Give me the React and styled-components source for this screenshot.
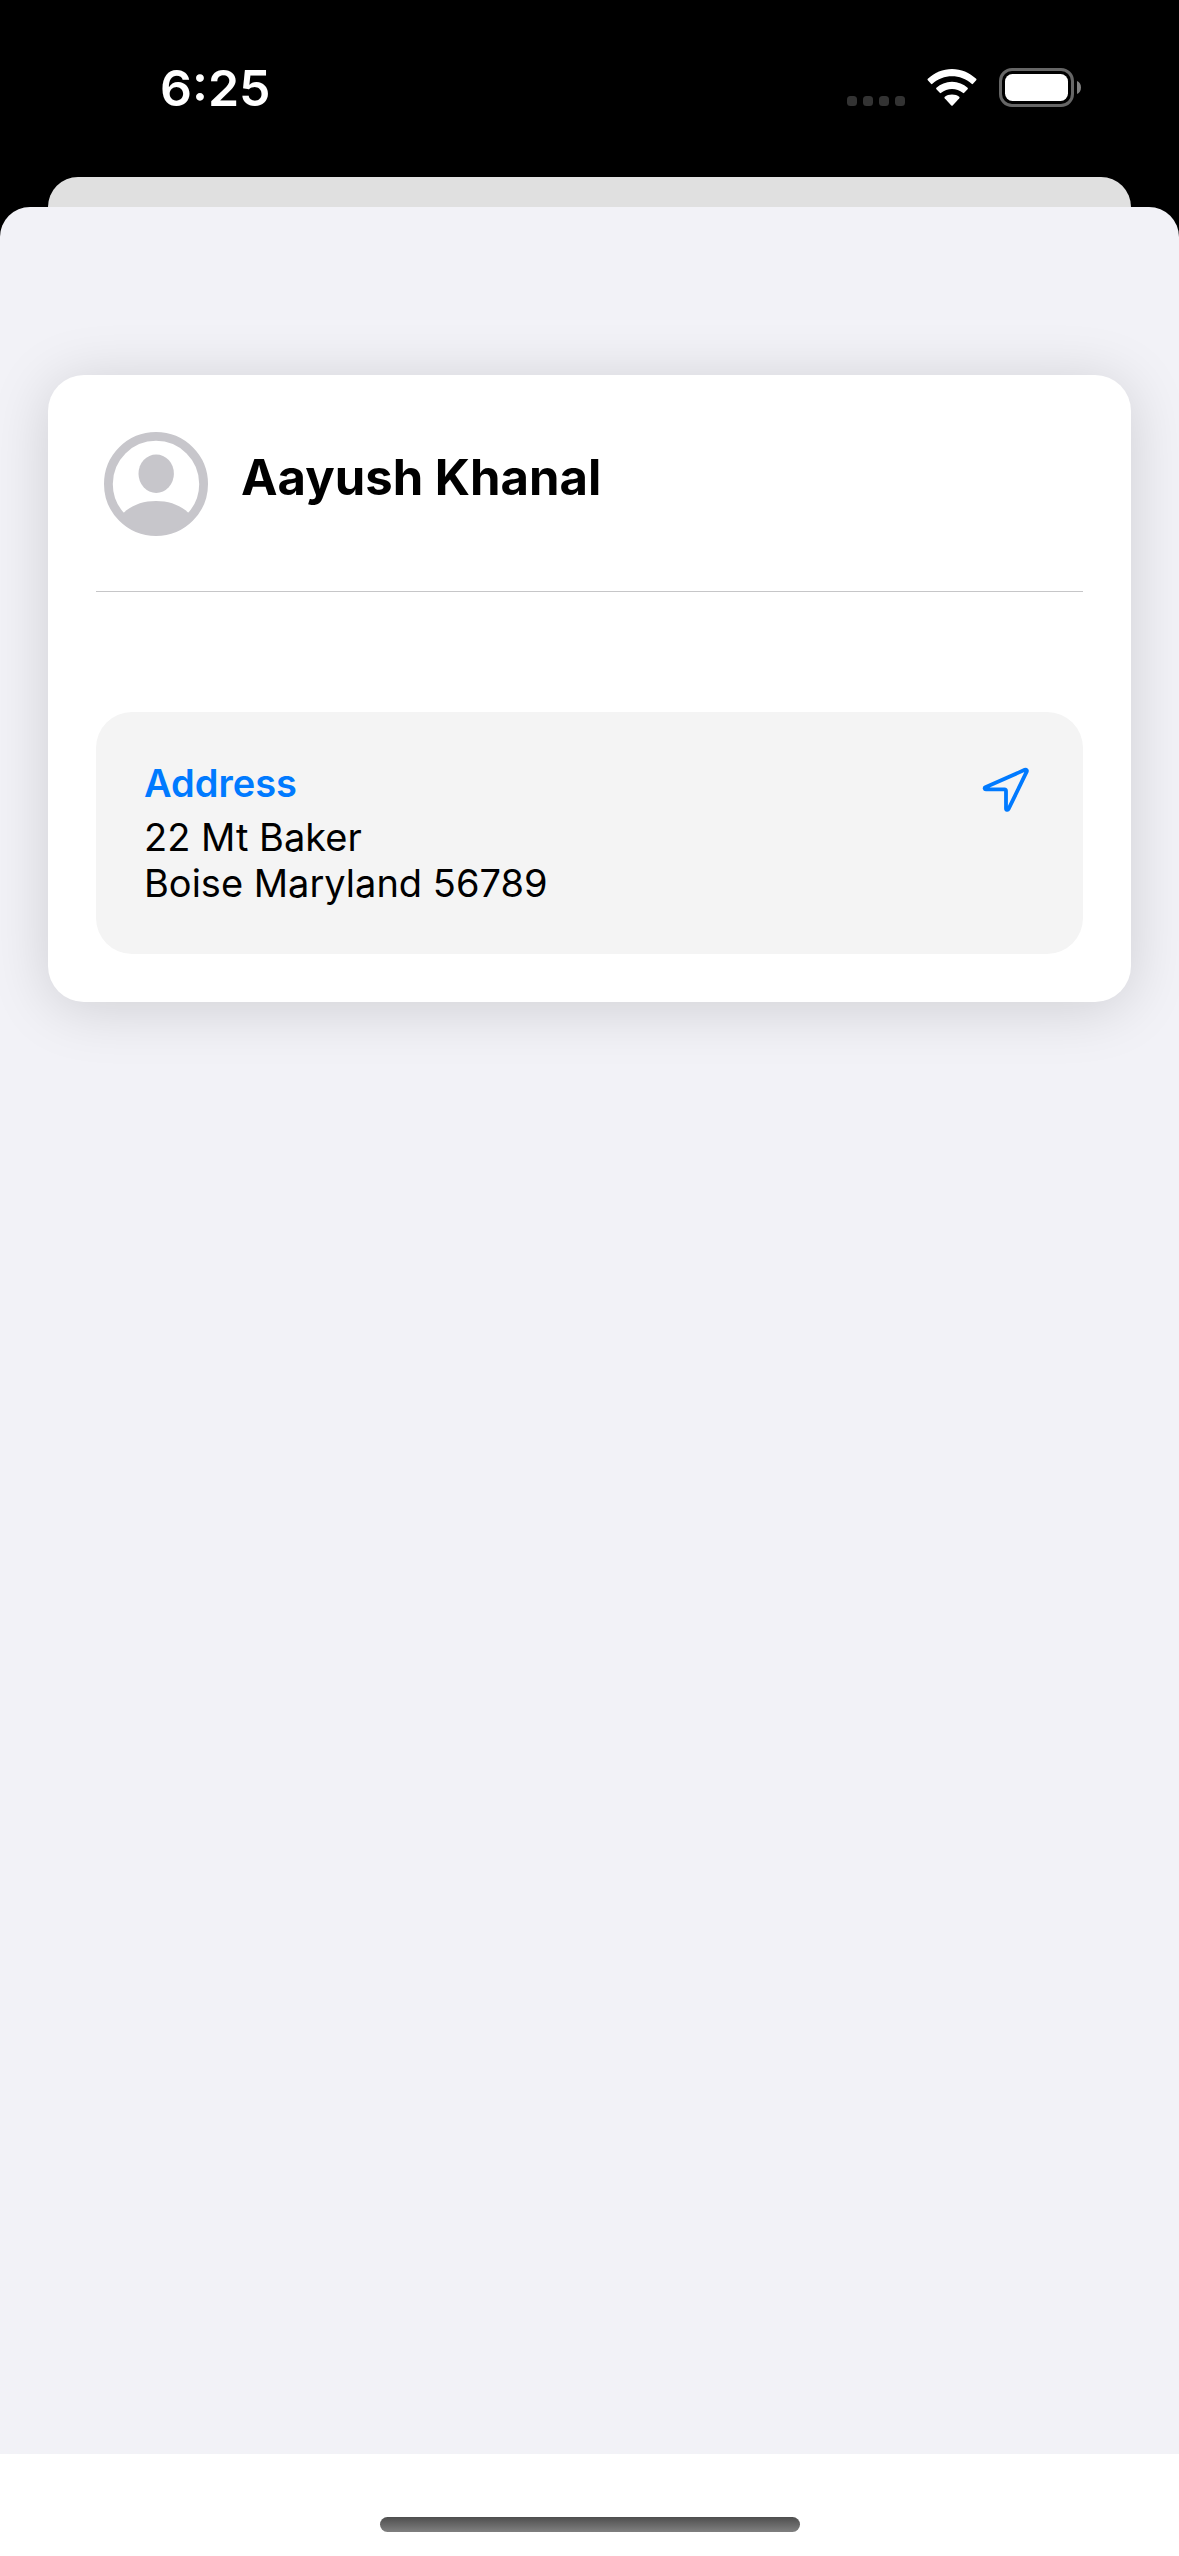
import React from "react";
import styled, { createGlobalStyle } from "styled-components";

const GlobalStyle = createGlobalStyle`
  *, *::before, *::after { box-sizing: border-box; }
  html, body { margin: 0; background: #000; }
  body, button { font-family: Inter, "Liberation Sans", sans-serif; }
`;

const Screen = styled.div`
  display: flex;
  flex-direction: column;
  min-height: 100vh;
  background: #000;
`;

const StatusBar = styled.header`
  display: flex;
  align-items: center;
  justify-content: space-between;
  height: 177px;
  padding: 0 98px 2px 160px;
  color: #fff;
`;

const Time = styled.time`
  font-size: 50px;
  line-height: 60px;
  font-weight: 600;
`;

const Indicators = styled.div`
  display: flex;
  align-items: center;
  gap: 22px;
`;

const BackSheet = styled.div`
  height: 30px;
  margin: 0 48px;
  border-radius: 30px 30px 0 0;
  background: #e0e0e0;
`;

const Sheet = styled.main`
  flex: 1;
  padding: 168px 48px;
  border-radius: 30px 30px 0 0;
  background: #f2f2f7;
`;

const Card = styled.article`
  padding: 48px;
  border-radius: 36px;
  background: #fff;
  box-shadow: 0 6px 60px rgba(0, 0, 0, 0.15);
`;

const CardHeader = styled.div`
  display: flex;
  align-items: center;
  gap: 25px;
  padding-bottom: 48px;
  border-bottom: 1px solid #c6c6c8;
`;

const Name = styled.h1`
  margin: 0;
  padding-bottom: 10px;
  font-size: 49px;
  line-height: 60px;
  font-weight: 700;
  color: #000;
`;

const AddressPanel = styled.section`
  display: flex;
  align-items: flex-start;
  justify-content: space-between;
  margin-top: 120px;
  padding: 48px;
  border-radius: 36px;
  background: #f4f4f4;
`;

const AddressText = styled.div`
  display: grid;
  gap: 8px;
  font-size: 38px;
  line-height: 46px;
`;

const Label = styled.h2`
  margin: 0;
  font-size: inherit;
  font-weight: 600;
  color: #007aff;
`;

const Address = styled.address`
  font-style: normal;
  color: #000;
`;

const IconButton = styled.button`
  display: block;
  width: 60px;
  height: 60px;
  padding: 0;
  border: 0;
  background: none;
  color: #007aff;
`;

const Icon = styled.svg`
  display: block;
  flex: none;
`;

const HomeBar = styled.footer`
  display: flex;
  justify-content: center;
  align-items: flex-end;
  height: 102px;
  padding-bottom: 24px;
  background: #fff;
`;

const HomeIndicator = styled.div`
  width: 420px;
  height: 15px;
  border-radius: 8px;
  background: linear-gradient(#4e4e4e, #808080);
`;

function CellularDots() {
  return (
    <Icon width="58" height="40" viewBox="0 0 58 40" fill="#333" aria-hidden="true">
      {[0, 16, 32, 48].map((x) => (
        <rect key={x} x={x} y="28" width="10" height="10" rx="3.5" />
      ))}
    </Icon>
  );
}

function Wifi() {
  return (
    <Icon width="50" height="40" viewBox="0 0 50 40" fill="#fff" aria-hidden="true">
      <path d="M25 1C34 1 42.700 4.700 49.200 10.800Q49.900 11.500 49.200 12.200L46 15.800Q45.300 16.500 44.600 15.800C39.200 10.800 32.200 8.300 25 8.300S10.800 10.800 5.400 15.800Q4.700 16.500 4 15.800L.8 12.200Q.1 11.500 .8 10.800C7.300 4.700 16 1 25 1Z" />
      <path d="M25 13.700C31.200 13.700 36.500 16 40.600 19.800Q41.300 20.500 40.600 21.200L37.200 24.800Q36.500 25.500 35.800 24.800C32.800 22.200 29 20.900 25 20.900S17.200 22.200 14.200 24.800Q13.500 25.500 12.800 24.800L9.400 21.200Q8.700 20.500 9.400 19.800C13.500 16 18.800 13.700 25 13.700Z" />
      <path d="M25 26.400C28 26.400 30.300 27.200 32.200 28.800Q33 29.500 32.300 30.300L25.700 37.400Q25 38.100 24.300 37.400L17.700 30.300Q17 29.500 17.800 28.800C19.700 27.200 22 26.400 25 26.400Z" />
    </Icon>
  );
}

function Battery() {
  return (
    <Icon width="82" height="40" viewBox="0 0 82 40" aria-hidden="true">
      <rect x="1.500" y="1.500" width="72" height="36" rx="11.500" fill="none" stroke="#666" strokeWidth="3" />
      <rect x="6" y="6" width="63" height="27" rx="7.500" fill="#fff" />
      <path d="M78 13C80.600 14 82 16.500 82 19.500S80.600 25 78 26Z" fill="#808080" />
    </Icon>
  );
}

function Avatar() {
  return (
    <Icon width="120" height="120" viewBox="0 0 120 120" role="img" aria-label="Contact photo">
      <circle cx="60" cy="61" r="47.600" fill="none" stroke="#c7c6cb" strokeWidth="8.800" />
      <ellipse cx="60.200" cy="50.700" rx="17.700" ry="19.200" fill="#c7c6cb" />
      <path d="M27.500 90C35 82.500 46.500 78 60 78S85 82.500 92.500 90L93 97A49 49 0 0 1 27 97Z" fill="#c7c6cb" />
    </Icon>
  );
}

function LocationArrow() {
  return (
    <Icon width="60" height="60" viewBox="0 0 60 60" aria-hidden="true">
      <path
        d="M10.400 27.300L49.800 9.800C51.300 9.200 52.300 10.300 51.700 11.700L33.600 48.900C32.900 50.400 31 50.100 31 48.500V31C31 29.900 30.500 29.400 29.500 29.400L10.900 29.300C9.500 29.300 9.200 27.900 10.400 27.300Z"
        fill="none"
        stroke="currentColor"
        strokeWidth="3.800"
        strokeLinejoin="round"
      />
    </Icon>
  );
}

export default function App() {
  return (
    <Screen>
      <GlobalStyle />
      <StatusBar>
        <Time>6:25</Time>
        <Indicators>
          <CellularDots />
          <Wifi />
          <Battery />
        </Indicators>
      </StatusBar>
      <BackSheet />
      <Sheet>
        <Card>
          <CardHeader>
            <Avatar />
            <Name>Aayush Khanal</Name>
          </CardHeader>
          <AddressPanel>
            <AddressText>
              <Label>Address</Label>
              <Address>
                22 Mt Baker
                <br />
                Boise Maryland 56789
              </Address>
            </AddressText>
            <IconButton type="button" aria-label="Get directions">
              <LocationArrow />
            </IconButton>
          </AddressPanel>
        </Card>
      </Sheet>
      <HomeBar>
        <HomeIndicator />
      </HomeBar>
    </Screen>
  );
}
